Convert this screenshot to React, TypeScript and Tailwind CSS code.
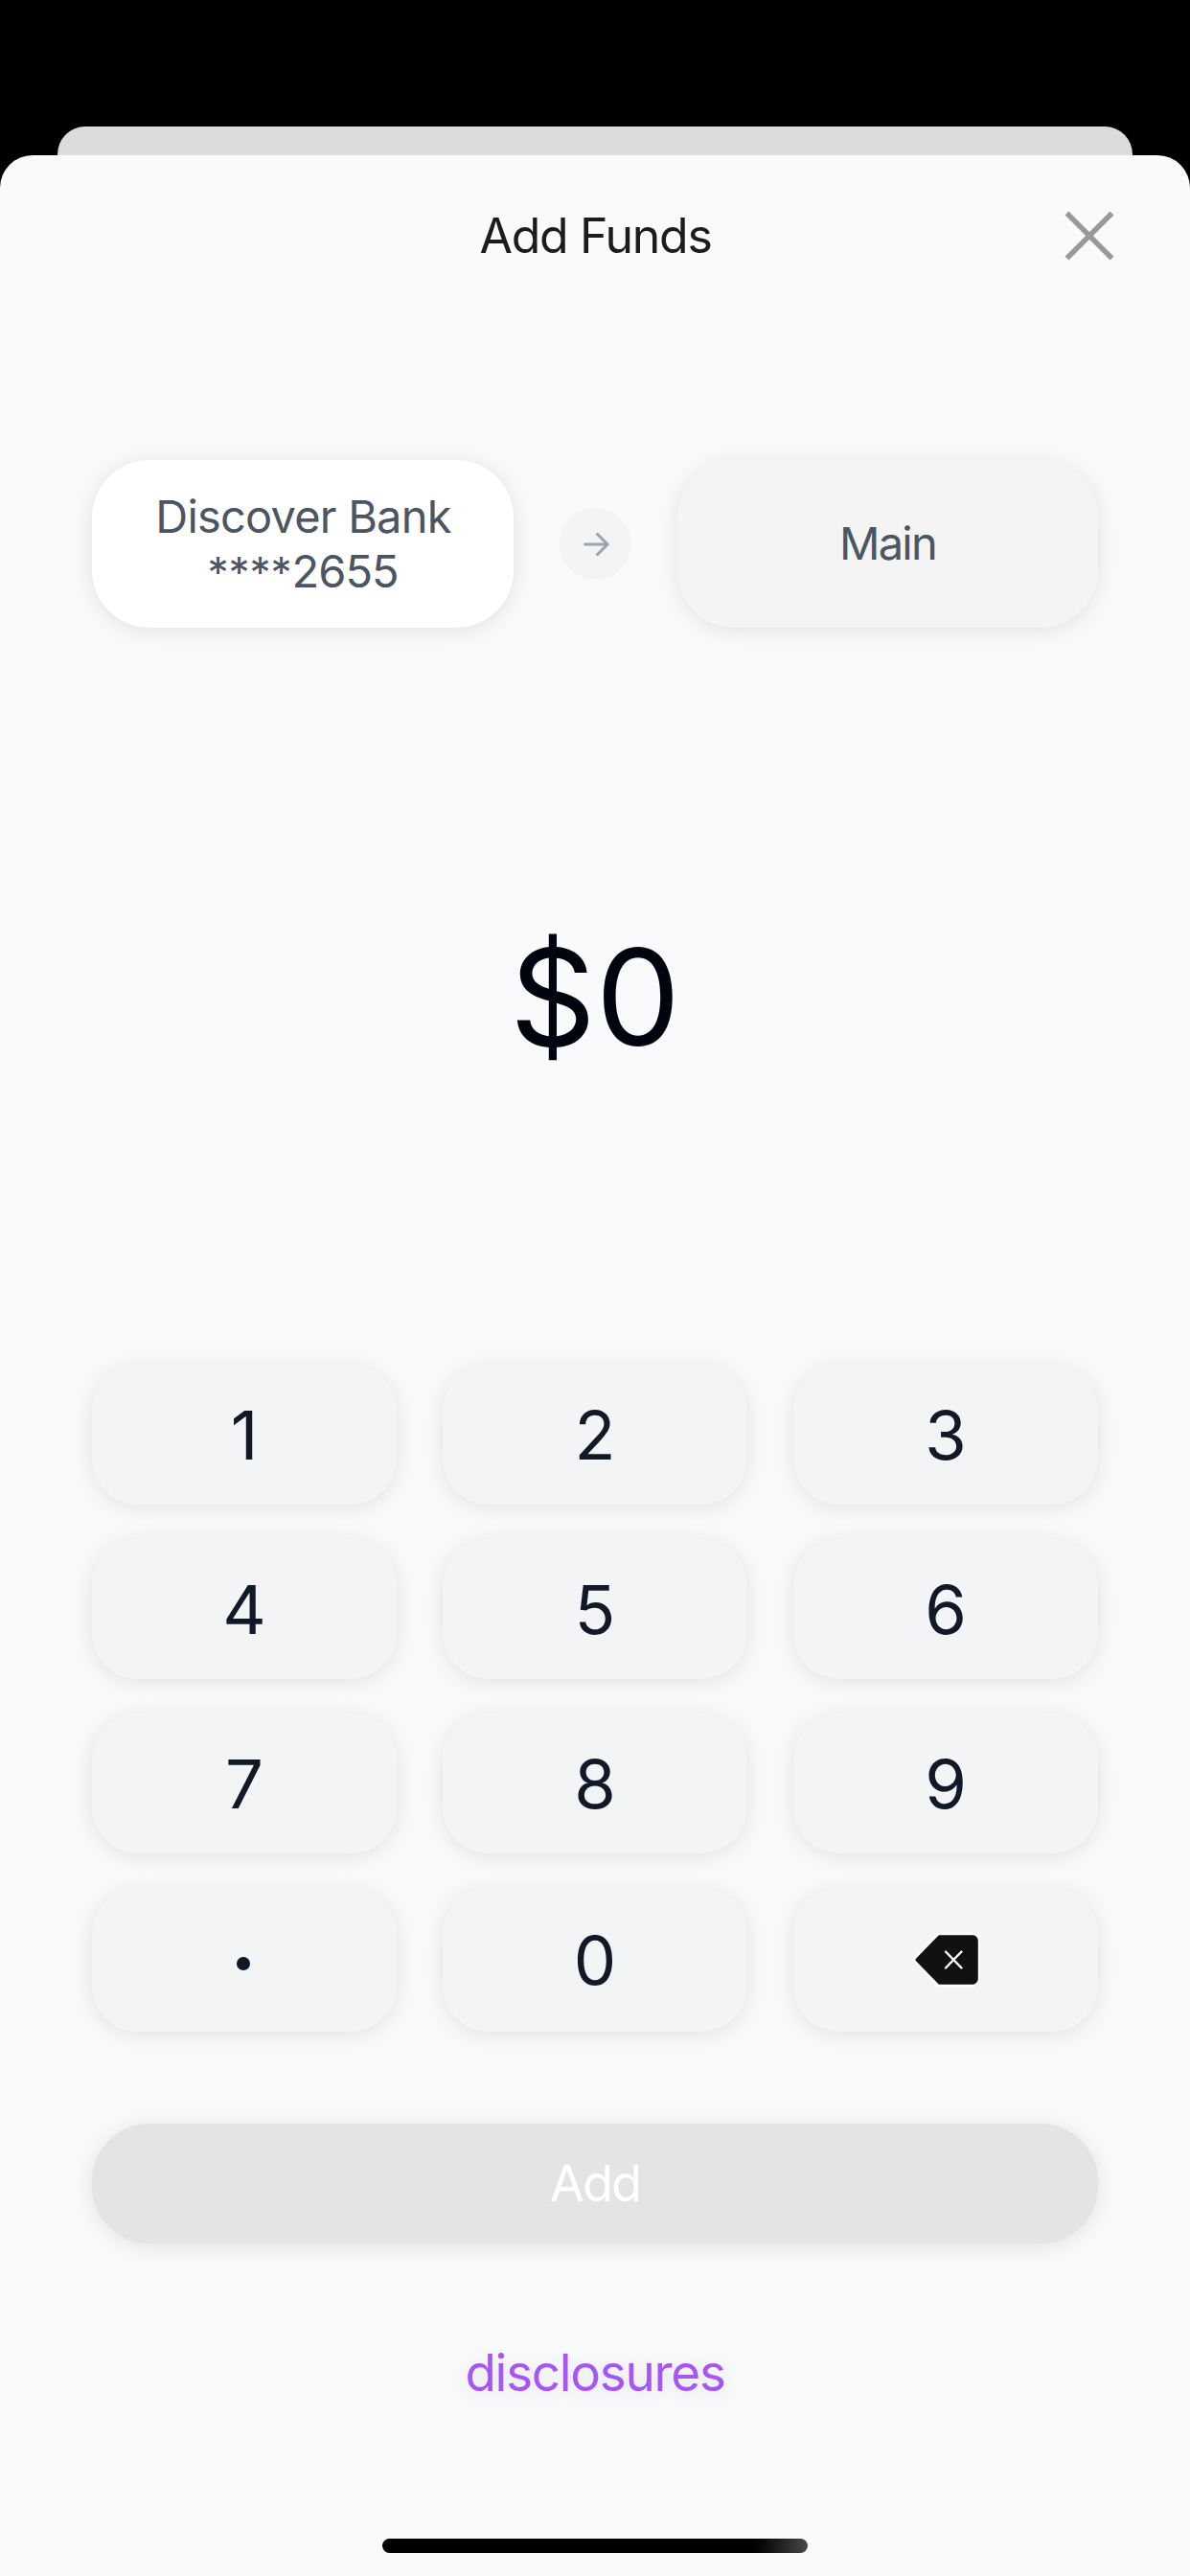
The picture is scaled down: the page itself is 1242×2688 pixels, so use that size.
const digits = ['1', '2', '3', '4', '5', '6', '7', '8', '9'];

const keyClass =
  'flex items-center justify-center rounded-[48px] bg-[#f3f4f6] pt-0.5 text-[70.5px] leading-none text-[#111827] shadow-[0_3px_22px_rgba(0,0,0,0.1)]';

function CloseIcon() {
  return (
    <svg width="52" height="52" viewBox="0 0 52 52" fill="none" stroke="#999999" strokeWidth="5.5">
      <path d="M2.5 2.5 49.5 49.5M49.5 2.5 2.5 49.5" />
    </svg>
  );
}

function ArrowIcon() {
  return (
    <svg width="28" height="28" viewBox="0 0 28 28" fill="none" stroke="#9ca3af" strokeWidth="3.2">
      <path d="M1.5 14H25.5M14.7 2.5 26 14 14.7 25.5" />
    </svg>
  );
}

function BackspaceIcon() {
  return (
    <svg className="mb-0.5 ml-0.5" width="70" height="58" viewBox="0 0 70 58" fill="none">
      <path
        d="M27.5 2H62a7 7 0 0 1 7 7V49a7 7 0 0 1-7 7H27.5a3 3 0 0 1-2-.8L2.2 31.2a3 3 0 0 1 0-4.4L25.5 2.8a3 3 0 0 1 2-.8Z"
        fill="#121013"
        stroke="#ffffff"
        strokeWidth="2.4"
      />
      <path d="m34 20.5 16.5 17M50.5 20.5 34 37.5" stroke="#ffffff" strokeWidth="2.4" strokeLinecap="round" />
    </svg>
  );
}

export default function App() {
  return (
    <div className="flex h-[2688px] w-[1242px] flex-col bg-black pt-[132px] font-['Inter','Liberation_Sans',sans-serif]">
      <div className="mx-[60px] h-[30px] shrink-0 rounded-t-[29px] bg-[#dbdcde]" />
      <main className="flex flex-1 flex-col items-center rounded-t-[34px] bg-[#f9fafc]">
        <header className="grid h-[168px] w-full grid-cols-[1fr_auto_1fr] items-center">
          <span />
          <h1 className="pl-px text-[50px] leading-none tracking-[-1.3px] text-[#1c1c1e]">Add Funds</h1>
          <button className="mr-[79px] justify-self-end" aria-label="Close">
            <CloseIcon />
          </button>
        </header>

        <section className="mt-[150px] flex w-[1050px] items-center justify-between">
          <div className="flex h-[175px] w-[440px] flex-col items-center justify-center rounded-[60px] bg-white pb-0.5 text-[47px] leading-[57px] text-[#4b5563] shadow-[0_3px_22px_rgba(0,0,0,0.1)]">
            <span className="pl-px tracking-[-0.8px]">Discover Bank</span>
            <span className="tracking-[-1px]">
              <span className="text-[44px] leading-none tracking-normal">****</span>2655
            </span>
          </div>
          <div className="flex size-[75px] items-center justify-center rounded-full bg-[#f3f4f6]">
            <ArrowIcon />
          </div>
          <div className="flex h-[175px] w-[439px] items-center justify-center rounded-[60px] bg-[#f4f4f4] pb-0.5 text-[47px] leading-none tracking-[-1.8px] text-[#4b5563] shadow-[0_3px_22px_rgba(0,0,0,0.1)]">
            Main
          </div>
        </section>

        <div className="flex h-[769px] items-center text-[140px] leading-none text-[#02050f]">$0</div>

        <section className="grid w-[1050px] grid-cols-3 grid-rows-[146px_146px_146px_150px] gap-x-12 gap-y-9">
          {digits.map(digit => (
            <button key={digit} className={keyClass}>
              {digit}
            </button>
          ))}
          <button className={keyClass} aria-label="Decimal point">
            <span className="mt-1.5 mr-0.5 size-[14px] rounded-full bg-[#111827]" />
          </button>
          <button className={keyClass}>0</button>
          <button className={keyClass} aria-label="Delete">
            <BackspaceIcon />
          </button>
        </section>

        <button className="mt-24 h-[125px] w-[1050px] shrink-0 rounded-[60px] bg-[#e4e4e6] text-[52.5px] leading-none tracking-[-2px] text-white shadow-[0_3px_22px_rgba(0,0,0,0.1)]">
          Add
        </button>

        <a className="mt-[105px] text-[53px] leading-[60px] tracking-[-1.3px] text-[#a855f7] [text-shadow:0_3px_22px_rgba(0,0,0,0.12)]">
          disclosures
        </a>

        <div className="mt-auto mb-6 h-[15px] w-[444px] rounded-full bg-linear-to-r from-black from-84% to-[#4a4a4a]" />
      </main>
    </div>
  );
}
